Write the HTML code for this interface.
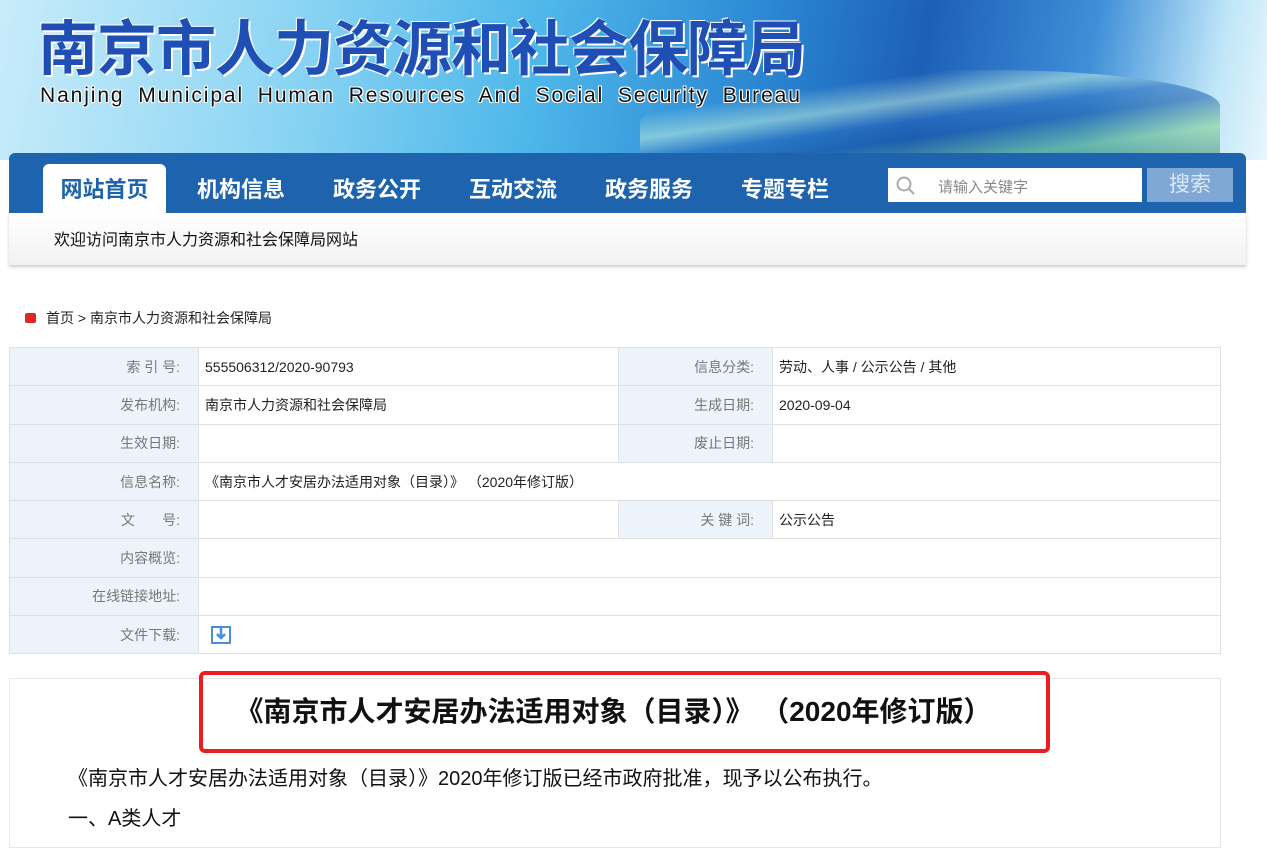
<!DOCTYPE html>
<html><head><meta charset="utf-8"><style>
*{margin:0;padding:0;box-sizing:border-box}
body{width:1267px;height:833px;overflow:hidden;background:#fff;font-family:"Liberation Sans","Noto Sans CJK SC",sans-serif;position:relative}
.banner{position:absolute;left:0;top:0;width:1267px;height:160px;background:linear-gradient(100deg,#c8ecfa 0%,#8fd6f4 22%,#4fb8ea 42%,#2a86d2 60%,#1d5fb8 72%,#3f8fd8 85%,#bfe6f8 95%,#e8f6fc 100%)}
.bridge{position:absolute;left:640px;top:70px;width:580px;height:90px;background:linear-gradient(172deg,transparent 25%,#bfeede 40%,#2a70c0 52%,#1a5aa8 62%,#7fd08a 80%,#3a8070 100%);opacity:.55;border-radius:60% 40% 0 0}
.t1{position:absolute;left:38px;top:1px;font-size:60px;font-weight:bold;color:#1f4fb5;letter-spacing:-1px;text-shadow:2px 2px 0 #fff,-1px -1px 0 #fff;font-family:"Noto Sans CJK SC",sans-serif}
.t2{position:absolute;left:40px;top:84px;font-size:21px;color:#111;letter-spacing:1.9px;word-spacing:6px;text-shadow:1px 1px 0 #fff,-1px -1px 0 #fff,1px -1px 0 #fff,-1px 1px 0 #fff}
.nav{position:absolute;left:9px;top:153px;width:1237px;height:60px;background:#1e63ad;border-radius:6px 6px 0 0}
.nav a{position:absolute;top:19px;color:#fff;font-size:22px;font-weight:bold}
.nav .on{position:absolute;left:34px;top:11px;width:123px;height:50px;background:#fff;border-radius:6px 6px 0 0;color:#1e63ad;text-align:center;padding-top:8px;font-size:22px;font-weight:bold}
.search{position:absolute;left:879px;top:15px;width:254px;height:34px;background:#fff}
.search span{position:absolute;left:50px;top:8px;font-size:15px;color:#888}
.btn{position:absolute;left:1138px;top:15px;width:86px;height:34px;background:#7fa8d6;color:#dfe9f5;font-size:21px;text-align:center;line-height:34px}
.wel{position:absolute;left:9px;top:213px;width:1237px;height:52px;background:linear-gradient(#fff,#f2f2f2);box-shadow:0 2px 3px #ccc;font-size:16px;padding:13px 0 0 45px;color:#111}
.crumb{position:absolute;left:25px;top:308px;font-size:14px;color:#222}
.crumb i{display:inline-block;width:11px;height:10px;background:#e0262a;border-radius:2px;margin-right:10px;vertical-align:0}
table{position:absolute;left:9px;top:347px;width:1212px;border-collapse:collapse;font-size:14px}
td{border:1px solid #e0e0e0;height:38.3px;padding:0 6px;color:#222}
td.l{background:#ecf3fb;color:#777;text-align:right;padding-right:18px}
.box{position:absolute;left:9px;top:678px;width:1212px;height:170px;border:1px solid #e6e6e6}
.red{position:absolute;left:199px;top:671px;width:851px;height:82px;border:4px solid #ee1c1c;border-radius:6px}
.h{position:absolute;left:0;width:1267px;top:690px;text-align:center;font-size:28px;font-weight:bold;color:#111;padding-right:40px}
.p{position:absolute;left:68px;font-size:20px;color:#111}
</style></head><body>
<div class="banner"><div class="bridge"></div>
<div class="t1">南京市人力资源和社会保障局</div>
<div class="t2">Nanjing Municipal Human Resources And Social Security Bureau</div></div>
<div class="nav"><div class="on">网站首页</div>
<a style="left:188px">机构信息</a><a style="left:324px">政务公开</a><a style="left:460px">互动交流</a><a style="left:596px">政务服务</a><a style="left:732px">专题专栏</a>
<div class="search"><svg style="position:absolute;left:8px;top:8px" width="20" height="20"><circle cx="8" cy="8" r="6.5" fill="none" stroke="#aaa" stroke-width="2"/><line x1="13" y1="13" x2="18" y2="18" stroke="#aaa" stroke-width="2"/></svg><span>请输入关键字</span></div>
<div class="btn">搜索</div></div>
<div class="wel">欢迎访问南京市人力资源和社会保障局网站</div>
<div class="crumb"><i></i>首页 &gt; 南京市人力资源和社会保障局</div>
<table>
<tr><td class="l" style="width:189px">索 引 号:</td><td style="width:420px">555506312/2020-90793</td><td class="l" style="width:154px">信息分类:</td><td>劳动、人事 / 公示公告 / 其他</td></tr>
<tr><td class="l">发布机构:</td><td>南京市人力资源和社会保障局</td><td class="l">生成日期:</td><td>2020-09-04</td></tr>
<tr><td class="l">生效日期:</td><td></td><td class="l">废止日期:</td><td></td></tr>
<tr><td class="l">信息名称:</td><td colspan="3">《南京市人才安居办法适用对象（目录）》 （2020年修订版）</td></tr>
<tr><td class="l">文&nbsp;&nbsp;&nbsp;&nbsp;&nbsp;&nbsp;&nbsp;号:</td><td></td><td class="l">关 键 词:</td><td>公示公告</td></tr>
<tr><td class="l">内容概览:</td><td colspan="3"></td></tr>
<tr><td class="l">在线链接地址:</td><td colspan="3"></td></tr>
<tr><td class="l">文件下载:</td><td colspan="3"><svg width="20" height="20" style="margin-left:6px;vertical-align:middle"><rect x="1" y="2" width="18" height="16" fill="none" stroke="#4a8ee0" stroke-width="2"/><path d="M10 3v10M6 9l4 4 4-4" stroke="#4a8ee0" stroke-width="2.5" fill="none"/></svg></td></tr>
</table>
<div class="box"></div>
<div class="red"></div>
<div class="h">《南京市人才安居办法适用对象（目录）》 （2020年修订版）</div>
<div class="p" style="top:762px">《南京市人才安居办法适用对象（目录）》2020年修订版已经市政府批准，现予以公布执行。</div>
<div class="p" style="top:802px">一、A类人才</div>
</body></html>
